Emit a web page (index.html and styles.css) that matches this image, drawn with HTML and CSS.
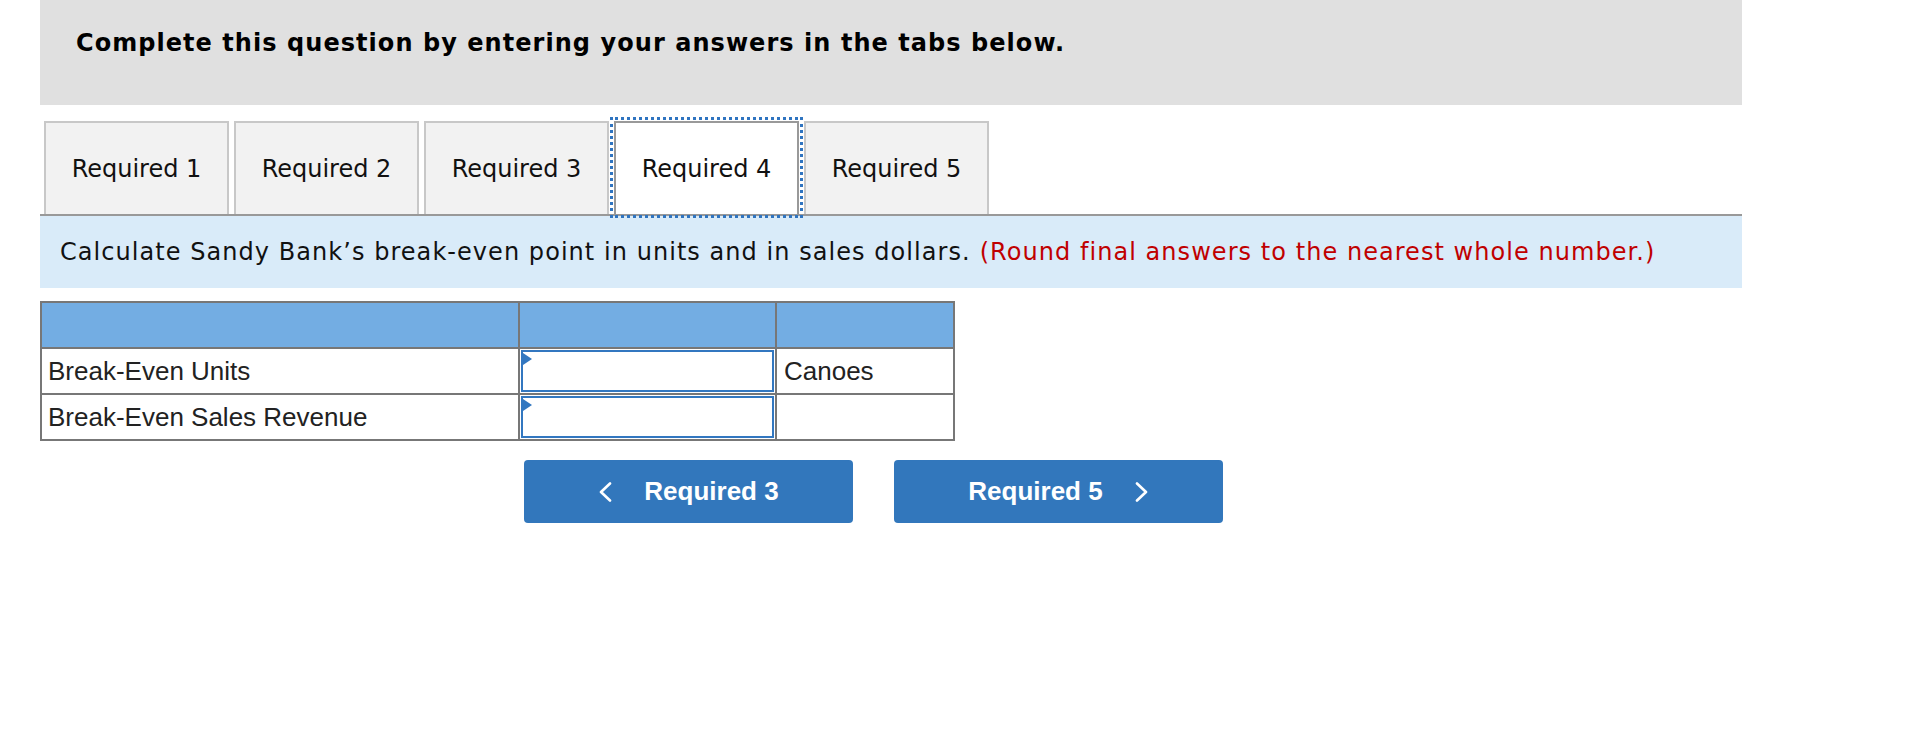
FILE: index.html
```html
<!DOCTYPE html>
<html lang="en">
<head>
<meta charset="utf-8">
<title>Required 4</title>
<link rel="stylesheet" href="styles.css">
</head>
<body>
<div class="page">
  <div class="header">
    <h1 class="header-title">Complete this question by entering your answers in the tabs below.</h1>
  </div>
  <div class="tabs">
    <div class="tab">Required 1</div>
    <div class="tab">Required 2</div>
    <div class="tab">Required 3</div>
    <div class="tab tab-active">Required 4</div>
    <div class="tab">Required 5</div>
  </div>
  <div class="instructions">
    <span>Calculate Sandy Bank’s break-even point in units and in sales dollars.</span>
    <span class="note">(Round final answers to the nearest whole number.)</span>
  </div>
  <table class="grid">
    <tr class="grid-head">
      <th class="col-label"></th>
      <th class="col-input"></th>
      <th class="col-unit"></th>
    </tr>
    <tr>
      <td class="col-label">Break-Even Units</td>
      <td class="col-input"><div class="answer"><span class="marker"></span></div></td>
      <td class="col-unit">Canoes</td>
    </tr>
    <tr>
      <td class="col-label">Break-Even Sales Revenue</td>
      <td class="col-input"><div class="answer"><span class="marker"></span></div></td>
      <td class="col-unit"></td>
    </tr>
  </table>
  <div class="nav">
    <button class="nav-btn">
      <svg class="chev" viewBox="0 0 14 20" width="14" height="20"><polyline points="12,1.5 3,10 12,18.5" fill="none" stroke="#fff" stroke-width="2.6" stroke-linecap="round" stroke-linejoin="round"/></svg>
      <span>Required 3</span>
    </button>
    <button class="nav-btn">
      <span>Required 5</span>
      <svg class="chev" viewBox="0 0 14 20" width="14" height="20"><polyline points="2,1.5 11,10 2,18.5" fill="none" stroke="#fff" stroke-width="2.6" stroke-linecap="round" stroke-linejoin="round"/></svg>
    </button>
  </div>
</div>
</body>
</html>
```
FILE: styles.css
```css
* { box-sizing: border-box; }
html, body { margin: 0; padding: 0; background: #fff; }
body { font-family: "DejaVu Sans", Verdana, sans-serif; color: #111; }

.page {
  margin-left: 40px;
  width: 1702px;
}

.header {
  background: #e0e0e0;
  height: 105px;
  padding: 28px 0 0 36px;
}
.header-title {
  margin: 0;
  font-size: 24px;
  letter-spacing: 1.05px;
  line-height: 30px;
  font-weight: bold;
  color: #000;
}

.tabs {
  display: flex;
  gap: 5px;
  padding: 16px 0 0 4px;
  border-bottom: 2px solid #999;
}
.tab {
  width: 185px;
  height: 93px;
  background: #f2f2f2;
  border: 2px solid #c8c8c8;
  border-bottom: none;
  display: flex;
  align-items: center;
  justify-content: center;
  font-size: 24px;
  color: #111;
}
.tab-active {
  background: #fff;
  border-color: #999;
  outline: 3px dotted #2f74c0;
  outline-offset: 1px;
}

.instructions {
  background: #d9ebf9;
  height: 72px;
  padding: 0 20px;
  display: flex;
  align-items: center;
  gap: 9px;
  font-size: 24px;
  letter-spacing: 1.05px;
  color: #111;
}
.note { color: #c00000; }

.grid {
  margin-top: 13px;
  border-collapse: collapse;
  font-family: "Liberation Sans", Arial, sans-serif;
  font-size: 26px;
  color: #222;
}
.grid th, .grid td {
  border: 2px solid #777;
  height: 46px;
  padding: 0;
}
.grid-head th { background: #73ade3; }
.col-label { width: 478px; padding-left: 6px !important; text-align: left; }
.col-input { width: 257px; }
.col-unit { width: 178px; padding-left: 7px !important; }

.answer {
  position: relative;
  height: 42px;
  margin: 0 1px;
  border: 2px solid #3277c0;
  background: #fff;
}
.marker {
  position: absolute;
  left: 0;
  top: 1px;
  width: 0;
  height: 0;
  border-top: 6px solid transparent;
  border-bottom: 6px solid transparent;
  border-left: 9px solid #3277c0;
}

.nav {
  display: flex;
  gap: 41px;
  margin: 19px 0 0 484px;
}
.nav-btn {
  width: 329px;
  height: 63px;
  border: none;
  border-radius: 4px;
  background: #3277bc;
  color: #fff;
  font-family: "Liberation Sans", Arial, sans-serif;
  font-weight: bold;
  font-size: 26px;
  display: flex;
  align-items: center;
  justify-content: center;
  gap: 32px;
  padding: 0;
}
.chev { display: block; }
```
